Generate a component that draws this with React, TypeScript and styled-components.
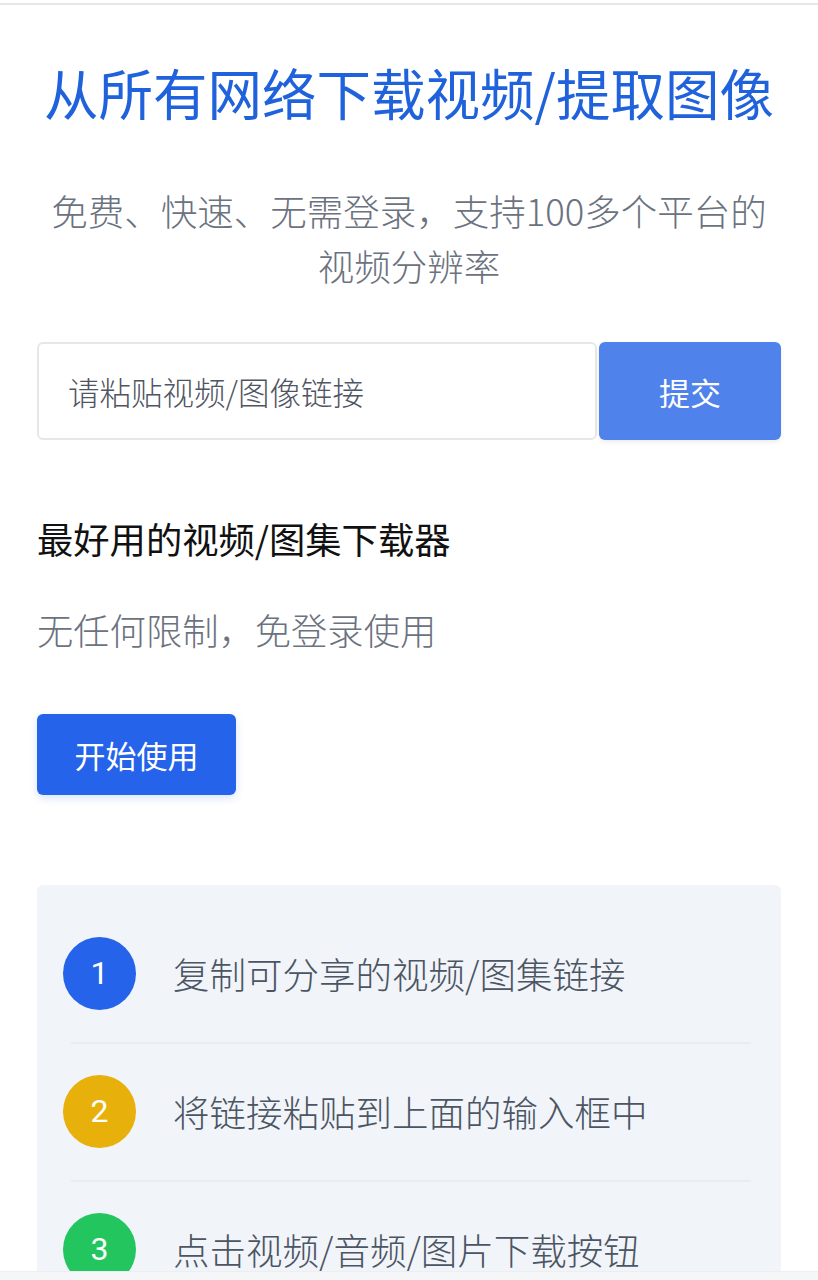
import styled, { createGlobalStyle } from "styled-components";

const GlobalStyle = createGlobalStyle`
  html, body {
    margin: 0;
    padding: 0;
    background: #ffffff;
    font-family: "Noto Sans CJK SC", "Noto Sans", sans-serif;
  }
  * { box-sizing: border-box; }
`;

const Page = styled.div`
  min-height: 1280px;
  border-top: 3px solid #fff;
  position: relative;
  overflow: hidden;
  &::before {
    content: "";
    display: block;
    height: 2px;
    background: #e6e7ea;
  }
`;

const Main = styled.main`
  padding: 47px 37px 0;
  display: flex;
  flex-direction: column;
`;

const Title = styled.h1`
  margin: 0;
  text-align: center;
  font-size: 54.5px;
  font-weight: 400;
  line-height: 80px;
  color: #1f62dc;
  white-space: nowrap;
  margin-left: -10px;
  margin-right: -10px;
`;

const Subtitle = styled.p`
  margin: 51px 0 0;
  text-align: center;
  font-size: 36.5px;
  font-weight: 300;
  line-height: 55px;
  color: #6b7280;
  padding: 0 10px;
`;

const Form = styled.form`
  display: flex;
  margin-top: 49px;
  height: 98px;
`;

const Input = styled.input`
  flex: 1;
  min-width: 0;
  border: 2px solid #e5e7eb;
  border-radius: 6px;
  padding: 0 29px;
  font-family: inherit;
  font-size: 31.5px;
  font-weight: 300;
  color: #111827;
  background: #fff;
  outline: none;
  &::placeholder {
    color: #4f5563;
  }
`;

const Submit = styled.button`
  width: 182px;
  margin-left: 2px;
  border: none;
  border-radius: 6px;
  background: #4f82ea;
  color: #fff;
  font-family: inherit;
  font-size: 31px;
  font-weight: 400;
  box-shadow: 0 2px 4px rgba(0, 0, 0, 0.08);
`;

const Heading = styled.h2`
  margin: 76px 0 0;
  font-size: 36.3px;
  font-weight: 400;
  line-height: 44px;
  color: #111111;
`;

const Lead = styled.p`
  margin: 47px 0 0;
  font-size: 36.3px;
  font-weight: 300;
  line-height: 44px;
  color: #6b7280;
`;

const StartButton = styled.button`
  align-self: flex-start;
  margin-top: 63px;
  width: 199px;
  height: 81px;
  border: none;
  border-radius: 6px;
  background: #2563eb;
  color: #fff;
  font-family: inherit;
  font-size: 31px;
  font-weight: 400;
  box-shadow: 0 3px 8px rgba(37, 99, 235, 0.18);
`;

const Card = styled.section`
  margin-top: 90px;
  background: #f1f4f9;
  border-radius: 6px;
  padding: 51px 30px 0 26px;
  display: flex;
  flex-direction: column;
`;

const Step = styled.div`
  display: flex;
  align-items: center;
  gap: 37px;
  height: 74px;
  & + & {
    margin-top: 64px;
    position: relative;
  }
  & + &::before {
    content: "";
    position: absolute;
    left: 8px;
    right: 0;
    top: -32px;
    height: 2px;
    background: #e9edf3;
  }
`;

const Badge = styled.span<{ $color: string }>`
  flex: none;
  width: 73px;
  height: 73px;
  border-radius: 50%;
  background: ${(p) => p.$color};
  color: #fff;
  display: flex;
  align-items: center;
  justify-content: center;
  font-family: Roboto, "Noto Sans", sans-serif;
  font-size: 32px;
  font-weight: 400;
`;

const StepText = styled.span`
  font-size: 36.5px;
  font-weight: 300;
  color: #4b5563;
`;

const BottomBar = styled.div`
  position: fixed;
  left: 0;
  right: 0;
  bottom: 0;
  height: 9px;
  background: #f5f6f8;
  border-top: 1px solid #eceef1;
`;

const steps = [
  { n: 1, color: "#2563eb", text: "复制可分享的视频/图集链接" },
  { n: 2, color: "#e8b00a", text: "将链接粘贴到上面的输入框中" },
  { n: 3, color: "#22c55e", text: "点击视频/音频/图片下载按钮" },
];

export default function App() {
  return (
    <>
      <GlobalStyle />
      <Page>
        <Main>
          <Title>从所有网络下载视频/提取图像</Title>
          <Subtitle>免费、快速、无需登录，支持100多个平台的视频分辨率</Subtitle>
          <Form onSubmit={(e) => e.preventDefault()}>
            <Input placeholder="请粘贴视频/图像链接" />
            <Submit type="submit">提交</Submit>
          </Form>
          <Heading>最好用的视频/图集下载器</Heading>
          <Lead>无任何限制，免登录使用</Lead>
          <StartButton>开始使用</StartButton>
          <Card>
            {steps.map((s) => (
              <Step key={s.n}>
                <Badge $color={s.color}>{s.n}</Badge>
                <StepText>{s.text}</StepText>
              </Step>
            ))}
          </Card>
        </Main>
        <BottomBar />
      </Page>
    </>
  );
}
